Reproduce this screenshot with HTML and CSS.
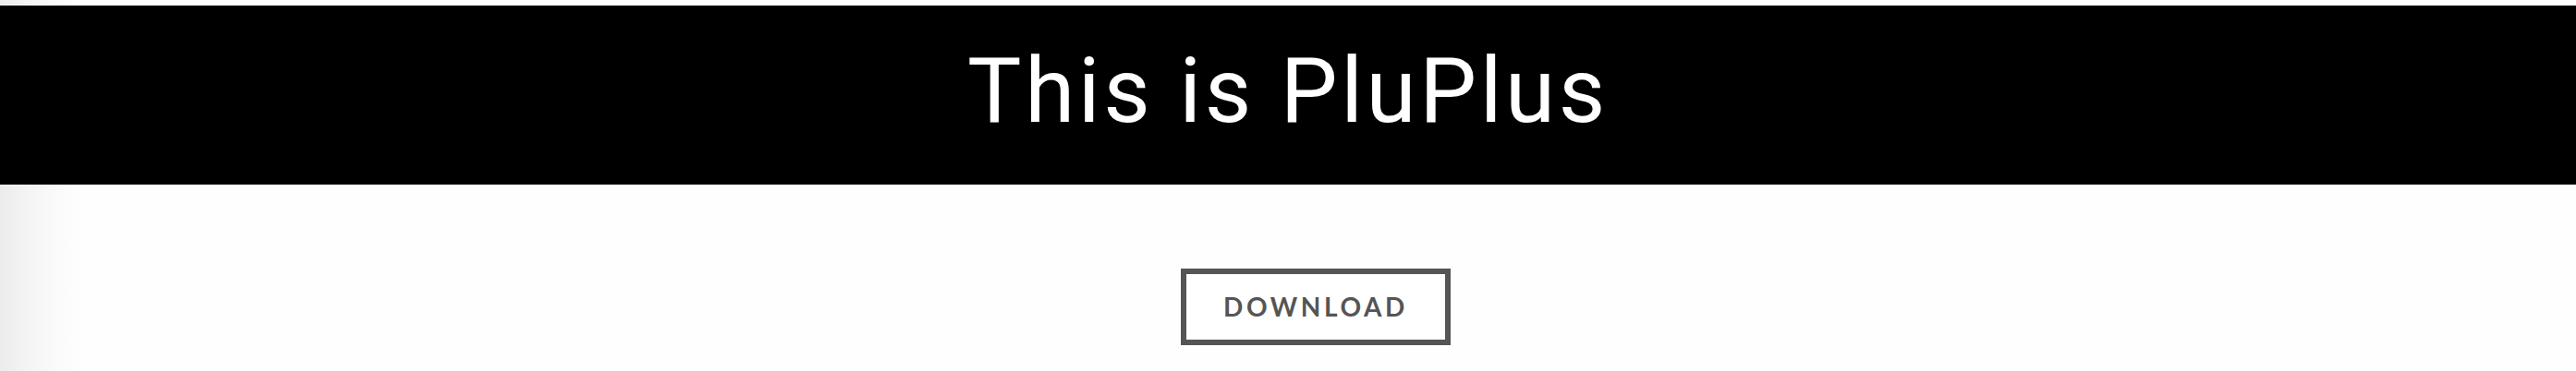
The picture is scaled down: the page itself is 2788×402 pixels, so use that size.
FILE: index.html
```html
<!DOCTYPE html>
<html lang="en">
<head>
<meta charset="utf-8">
<title>PluPlus</title>
<link rel="stylesheet" href="styles.css">
</head>
<body>
  <header class="hero">
    <h1 class="hero-title">This is PluPlus</h1>
  </header>
  <main class="actions">
    <a class="btn-download" href="#">DOWNLOAD</a>
  </main>
</body>
</html>
```

FILE: styles.css
```css
html, body {
  margin: 0;
  padding: 0;
}

body {
  min-height: 402px;
  padding-top: 6px;
  box-sizing: border-box;
  background: linear-gradient(to right, #ececec 0px, #f4f4f4 30px, #fafafa 60px, #fefefe 88px, #fefefe 100%);
  font-family: "Roboto", "Liberation Sans", sans-serif;
}

.hero {
  background: #000;
  height: 194px;
  display: flex;
  justify-content: center;
}

.hero-title {
  margin: 0;
  padding-bottom: 6px;
  line-height: 186px;
  font-size: 98px;
  font-weight: 400;
  color: #fff;
  letter-spacing: 3.6px;
}

.actions {
  display: flex;
  justify-content: center;
  padding-top: 91px;
  padding-left: 60px;
}

.btn-download {
  display: inline-block;
  width: 280px;
  height: 71px;
  line-height: 71px;
  text-align: center;
  border: 6px solid #555;
  background: #fff;
  color: #555;
  font-family: "Lato", "Liberation Sans", sans-serif;
  font-weight: 700;
  font-size: 28px;
  letter-spacing: 3.6px;
  text-decoration: none;
}
```
